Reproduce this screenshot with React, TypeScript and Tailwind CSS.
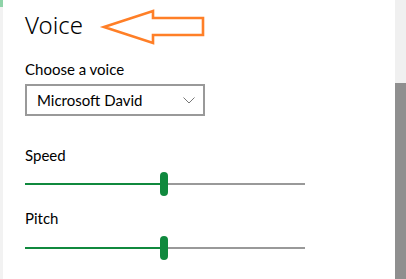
import React from "react";

function Slider({ value }: { value: number }) {
  return (
    <div className="relative w-[280px] h-[24px] flex items-center">
      <div className="h-[2px] bg-[#10893e]" style={{ width: `${value}px` }} />
      <div className="h-[2px] flex-1 bg-[#999999]" />
      <div
        className="absolute top-0 w-[8px] h-[24px] rounded-[4px] bg-[#10893e]"
        style={{ left: `${value - 1}px` }}
      />
    </div>
  );
}

export default function App() {
  return (
    <div
      className="relative flex w-[406px] h-[279px] bg-white overflow-hidden text-black"
      style={{ fontFamily: 'Lato, "Noto Sans", sans-serif' }}
    >
      <div className="w-[3px] h-full bg-[#f2f2f2] flex flex-col">
        <div className="h-[7px] bg-[#8fd3a8]" />
      </div>
      <div className="flex-1 flex flex-col pl-[22px]">
        <div
          className="mt-[9px] text-[24px] font-light leading-[32px]"
          style={{ fontFamily: '"Noto Sans", sans-serif' }}
        >
          Voice
        </div>
        <div className="mt-[18px] text-[15px] leading-[20px]">Choose a voice</div>
        <div className="mt-[5px] w-[180px] h-[32px] border-2 border-[#999999] flex items-center justify-between pl-[10px] pr-[8px]">
          <span className="text-[15px]">Microsoft David</span>
          <svg width="12" height="7" viewBox="0 0 12 7" fill="none">
            <path d="M0.5 0.5 L6 6 L11.5 0.5" stroke="#777" strokeWidth="1" />
          </svg>
        </div>
        <div className="mt-[29px] text-[15px] leading-[20px]">Speed</div>
        <div className="mt-[7px]">
          <Slider value={136} />
        </div>
        <div className="mt-[12px] text-[15px] leading-[20px]">Pitch</div>
        <div className="mt-[8px]">
          <Slider value={136} />
        </div>
      </div>
      <div className="w-[11px] h-full flex flex-col bg-[#f0f0f0]">
        <div className="h-[83px]" />
        <div className="flex-1 bg-[#8f8f8f]" />
      </div>
      <svg
        className="absolute left-0 top-0 pointer-events-none"
        width="406"
        height="279"
        viewBox="0 0 406 279"
      >
        <polygon
          points="104,27 153,11 153,18 203,18 203,35 153,35 153,43"
          fill="none"
          stroke="#ff7f27"
          strokeWidth="2.6"
          strokeLinejoin="miter"
        />
      </svg>
    </div>
  );
}
